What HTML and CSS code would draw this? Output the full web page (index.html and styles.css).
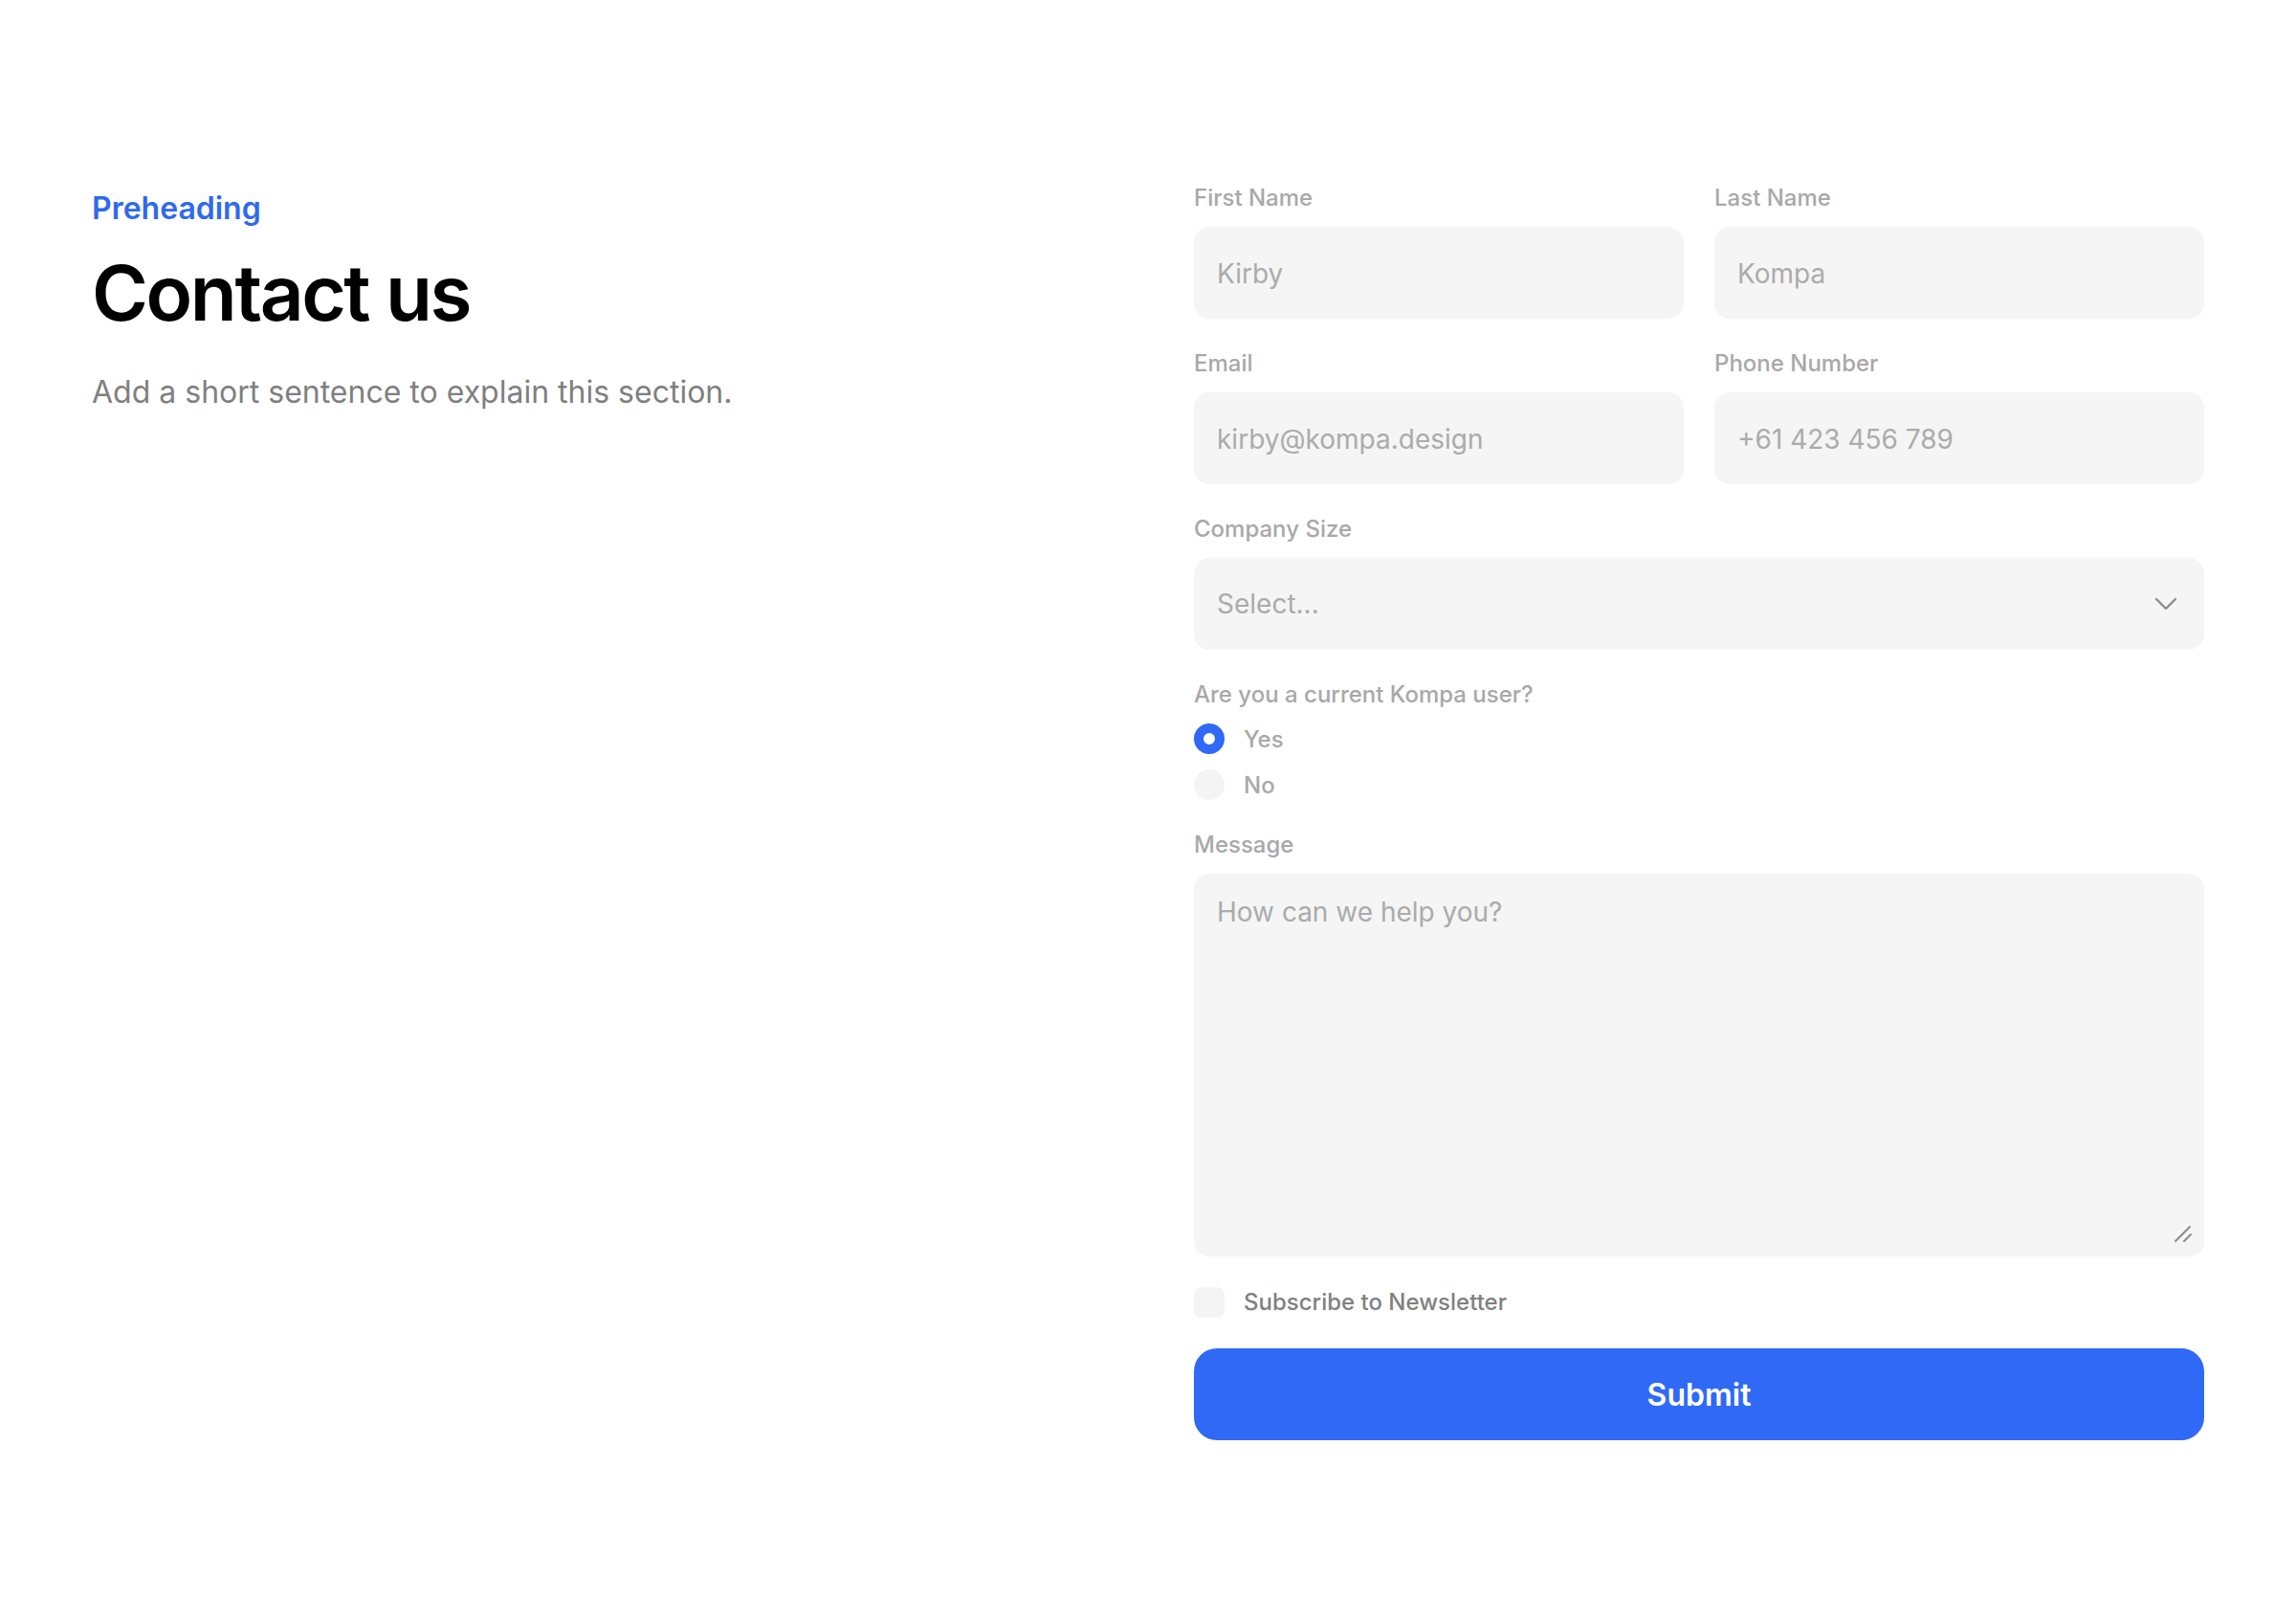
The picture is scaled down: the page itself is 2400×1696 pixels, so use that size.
FILE: index.html
```html
<!DOCTYPE html>
<html lang="en">
<head>
<meta charset="utf-8">
<title>Contact us</title>
<link rel="stylesheet" href="styles.css">
</head>
<body>
<main class="page">
  <section class="intro">
    <p class="preheading">Preheading</p>
    <h1 class="title">Contact us</h1>
    <p class="lede">Add a short sentence to explain this section.</p>
  </section>

  <form class="form">
    <div class="row">
      <label class="field">
        <span class="label">First Name</span>
        <input class="input" type="text" placeholder="Kirby">
      </label>
      <label class="field">
        <span class="label">Last Name</span>
        <input class="input" type="text" placeholder="Kompa">
      </label>
    </div>

    <div class="row">
      <label class="field">
        <span class="label">Email</span>
        <input class="input" type="email" placeholder="kirby@kompa.design">
      </label>
      <label class="field">
        <span class="label">Phone Number</span>
        <input class="input" type="tel" placeholder="+61 423 456 789">
      </label>
    </div>

    <div class="field">
      <span class="label">Company Size</span>
      <div class="select">
        <span class="select-text">Select...</span>
        <svg class="chevron" width="24" height="14" viewBox="0 0 24 14" aria-hidden="true">
          <polyline points="2,2 12,12 22,2" fill="none" stroke="#8c8c8c" stroke-width="2.4" stroke-linecap="round" stroke-linejoin="round"/>
        </svg>
      </div>
    </div>

    <div class="field radio-group">
      <span class="label">Are you a current Kompa user?</span>
      <div class="option">
        <span class="radio radio-on"></span>
        <span class="option-text">Yes</span>
      </div>
      <div class="option">
        <span class="radio"></span>
        <span class="option-text">No</span>
      </div>
    </div>

    <label class="field">
      <span class="label">Message</span>
      <span class="textarea-wrap">
        <textarea class="textarea" placeholder="How can we help you?"></textarea>
        <svg class="resize" width="20" height="20" viewBox="0 0 20 20" aria-hidden="true">
          <line x1="2" y1="17" x2="17" y2="2" stroke="#8c8c8c" stroke-width="2" stroke-linecap="round"/>
          <line x1="11" y1="17" x2="18" y2="10" stroke="#8c8c8c" stroke-width="2" stroke-linecap="round"/>
        </svg>
      </span>
    </label>

    <div class="option">
      <span class="checkbox"></span>
      <span class="option-text check-text">Subscribe to Newsletter</span>
    </div>

    <button class="submit" type="button">Submit</button>
  </form>
</main>
</body>
</html>
```

FILE: styles.css
```css
* {
  box-sizing: border-box;
}

html, body {
  margin: 0;
  background: #ffffff;
}

body {
  font-family: Inter, "Noto Sans", "Liberation Sans", sans-serif;
  color: #111111;
}

.page {
  display: grid;
  grid-template-columns: 1fr 1fr;
  column-gap: 96px;
  padding: 192px 96px 192px 96px;
  align-items: start;
}

.intro {
  display: flex;
  flex-direction: column;
  padding-top: 2px;
}

.preheading {
  margin: 0;
  font-size: 32px;
  line-height: 48px;
  font-weight: 600;
  color: #2f69ec;
}

.title {
  margin: 14px 0 0 0;
  font-size: 80px;
  line-height: 100px;
  font-weight: 600;
  letter-spacing: -0.03em;
  color: #000000;
}

.lede {
  margin: 30px 0 0 0;
  font-size: 32px;
  line-height: 48px;
  font-weight: 400;
  color: #7f7f7f;
}

.form {
  display: flex;
  flex-direction: column;
  gap: 32px;
}

.row {
  display: grid;
  grid-template-columns: 1fr 1fr;
  column-gap: 32px;
}

.field {
  display: flex;
  flex-direction: column;
  gap: 16px;
}

.label {
  font-size: 24px;
  line-height: 29px;
  font-weight: 500;
  color: #a8a8a8;
}

.input,
.select,
.textarea {
  width: 100%;
  border: none;
  outline: none;
  background: #f5f5f5;
  border-radius: 16px;
  font-family: inherit;
  font-size: 28px;
  font-weight: 400;
  color: #333333;
}

.input {
  height: 96px;
  padding: 2px 24px 0 24px;
}

.input::placeholder,
.textarea::placeholder {
  color: #ababab;
  opacity: 1;
}

.select {
  height: 96px;
  padding: 0 28px 0 24px;
  display: flex;
  align-items: center;
  justify-content: space-between;
}

.select-text {
  color: #ababab;
  line-height: 34px;
}

.chevron {
  display: block;
}

.radio-group {
  gap: 16px;
}

.option {
  display: flex;
  align-items: center;
  gap: 20px;
  height: 32px;
}

.radio {
  width: 32px;
  height: 32px;
  border-radius: 50%;
  background: #f4f4f4;
  flex: none;
}

.radio-on {
  background: #ffffff;
  border: 10.5px solid #2f69f6;
}

.option-text {
  font-size: 24px;
  line-height: 29px;
  font-weight: 500;
  color: #a8a8a8;
}

.check-text {
  color: #808080;
  margin-top: -2px;
}

.checkbox {
  width: 32px;
  height: 32px;
  border-radius: 8px;
  background: #f4f4f4;
  flex: none;
}

.textarea-wrap {
  position: relative;
  display: block;
}

.textarea {
  display: block;
  height: 400px;
  padding: 23px 24px;
  resize: none;
  line-height: 34px;
}

.resize {
  position: absolute;
  right: 12px;
  bottom: 13px;
}

.submit {
  height: 96px;
  width: 100%;
  border: none;
  border-radius: 24px;
  background: #2f69f6;
  color: #ffffff;
  font-family: inherit;
  font-size: 32px;
  font-weight: 600;
  cursor: pointer;
}
```
